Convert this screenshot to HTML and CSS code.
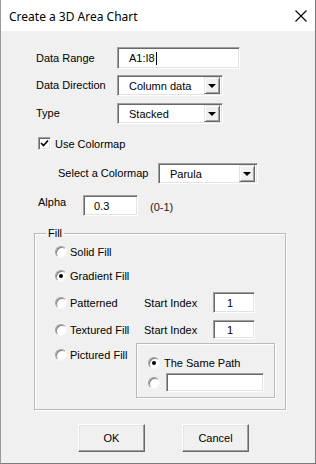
FILE: index.html
```html
<!DOCTYPE html>
<html lang="en">
<head>
    <meta charset="UTF-8">
    <meta name="viewport" content="width=device-width, initial-scale=1.0">
    <title>Create a 3D Area Chart</title>
    <link rel="stylesheet" href="styles.css">
</head>
<body>
    <div class="window">
        <div class="titlebar">
            <span class="title">Create a 3D Area Chart</span>
            <svg class="close" width="12" height="12" viewBox="0 0 12 12">
                <path d="M0.5 0.5 L11.5 11.5 M11.5 0.5 L0.5 11.5" stroke="#000" stroke-width="1.1" fill="none"/>
            </svg>
        </div>

        <div class="content">
            <div class="row row-range">
                <span class="label">Data Range</span>
                <div class="field field-range">A1:I8<span class="caret"></span></div>
            </div>
            <div class="row row-dir">
                <span class="label">Data Direction</span>
                <div class="combo combo-main">
                    <span class="combo-text">Column data</span>
                    <span class="drop"><span class="arrow"></span></span>
                </div>
            </div>
            <div class="row row-type">
                <span class="label">Type</span>
                <div class="combo combo-main">
                    <span class="combo-text">Stacked</span>
                    <span class="drop"><span class="arrow"></span></span>
                </div>
            </div>

            <div class="row row-check">
                <span class="checkbox">
                    <svg width="9" height="9" viewBox="0 0 9 9">
                        <path d="M1 4 L3.5 6.5 L8 1.5" stroke="#000" stroke-width="1.6" fill="none"/>
                    </svg>
                </span>
                <span class="check-text">Use Colormap</span>
            </div>

            <div class="row row-cmap">
                <span class="label label-cmap">Select a Colormap</span>
                <div class="combo combo-cmap">
                    <span class="combo-text">Parula</span>
                    <span class="drop"><span class="arrow"></span></span>
                </div>
            </div>

            <div class="row row-alpha">
                <span class="label label-alpha">Alpha</span>
                <div class="field field-alpha">0.3</div>
                <span class="hint">(0-1)</span>
            </div>

            <div class="group">
                <span class="legend">Fill</span>
                <div class="grow grow-solid">
                    <span class="option"><span class="radio"></span>Solid Fill</span>
                </div>
                <div class="grow grow-grad">
                    <span class="option"><span class="radio checked"></span>Gradient Fill</span>
                </div>
                <div class="grow grow-pat">
                    <span class="option"><span class="radio"></span>Patterned</span>
                    <span class="idx-label">Start Index</span>
                    <div class="field field-idx">1</div>
                </div>
                <div class="grow grow-tex">
                    <span class="option"><span class="radio"></span>Textured Fill</span>
                    <span class="idx-label">Start Index</span>
                    <div class="field field-idx">1</div>
                </div>
                <div class="grow grow-pic">
                    <span class="option option-pic"><span class="radio"></span>Pictured Fill</span>
                    <div class="subgroup">
                        <div class="sub-row sub-same">
                            <span class="radio checked"></span>The Same Path
                        </div>
                        <div class="sub-row sub-path">
                            <span class="radio"></span>
                            <div class="field field-path"></div>
                        </div>
                    </div>
                </div>
            </div>

            <div class="buttons">
                <button class="btn">OK</button>
                <button class="btn">Cancel</button>
            </div>
        </div>
    </div>
</body>
</html>
```

FILE: styles.css
```css
* {
    box-sizing: border-box;
}
body {
    margin: 0;
    padding: 0;
    font-family: "Liberation Sans", Arial, sans-serif;
    font-size: 11px;
    color: #000;
    background: #f0f0f0;
}
.window {
    width: 316px;
    height: 464px;
    background: #f0f0f0;
    border-left: 1px solid #9a9a9a;
    border-right: 1px solid #7a7a7a;
    border-bottom: 1px solid #7a7a7a;
    overflow: hidden;
}
.titlebar {
    height: 31px;
    background: #fff;
    display: flex;
    align-items: center;
    padding-left: 8px;
    padding-right: 8px;
}
.title {
    font-family: "Noto Sans", "Open Sans", sans-serif;
    font-size: 12px;
    flex: 1;
    padding-top: 1px;
}
.close {
    margin-right: 0;
}
.content {
    padding-top: 16px;
}
.row {
    display: flex;
    align-items: center;
    margin-left: 35px;
}
.label {
    width: 81px;
    line-height: 13px;
}

/* sunken controls */
.field,
.combo,
.checkbox {
    background: #fff;
    border: 1px solid;
    border-color: #a0a0a0 #fff #fff #a0a0a0;
    box-shadow: inset 1px 1px 0 #696969, inset -1px -1px 0 #e3e3e3;
}
.field {
    display: flex;
    align-items: center;
    padding-left: 11px;
}
.row-range {
    height: 22px;
}
.field-range {
    width: 123px;
    height: 22px;
}
.caret {
    display: inline-block;
    width: 1px;
    height: 13px;
    background: #000;
    margin-left: 1px;
}
.row-dir {
    margin-top: 6px;
    height: 21px;
}
.row-type {
    margin-top: 7px;
    height: 21px;
}
.combo {
    display: flex;
    align-items: center;
    height: 21px;
    padding: 2px;
}
.combo-main {
    width: 106px;
}
.combo-text {
    flex: 1;
    padding-left: 9px;
}
.drop {
    width: 16px;
    height: 17px;
    background: #f0f0f0;
    border: 1px solid;
    border-color: #e3e3e3 #696969 #696969 #e3e3e3;
    box-shadow: inset 1px 1px 0 #fff, inset -1px -1px 0 #a0a0a0;
    display: flex;
    align-items: center;
    justify-content: center;
}
.arrow {
    width: 0;
    height: 0;
    border-left: 4px solid transparent;
    border-right: 4px solid transparent;
    border-top: 4px solid #000;
    margin-top: 1px;
}

.row-check {
    margin-top: 13px;
    margin-left: 37px;
    height: 13px;
}
.checkbox {
    width: 13px;
    height: 13px;
    display: flex;
    align-items: center;
    justify-content: center;
}
.check-text {
    margin-left: 4px;
}

.row-cmap {
    margin-top: 13px;
    margin-left: 57px;
    height: 21px;
}
.label-cmap {
    width: 100px;
}
.combo-cmap {
    width: 100px;
}

.row-alpha {
    margin-top: 11px;
    margin-left: 37px;
    height: 21px;
    align-items: flex-start;
}
.label-alpha {
    width: 45px;
    margin-top: 1px;
}
.field-alpha {
    width: 55px;
    height: 21px;
    padding-left: 10px;
}
.hint {
    margin-left: 12px;
    margin-top: 6px;
    color: #202020;
}

/* Fill group */
.group {
    position: relative;
    margin-top: 17px;
    margin-left: 33px;
    width: 252px;
    height: 177px;
    border: 1px solid #b9b9b9;
    box-shadow: 1px 1px 0 #fff, inset 1px 1px 0 #fff;
    padding-top: 9px;
}
.legend {
    position: absolute;
    top: -7px;
    left: 11px;
    padding: 0 2px;
    background: #f0f0f0;
    line-height: 13px;
}
.grow {
    display: flex;
    align-items: center;
    padding-left: 20px;
}
.grow-solid {
    height: 18px;
}
.grow-grad {
    margin-top: 6px;
    height: 18px;
}
.grow-pat {
    margin-top: 7px;
    height: 21px;
}
.grow-tex {
    margin-top: 7px;
    height: 19px;
}
.grow-pic {
    margin-top: 4px;
    align-items: flex-start;
}
.option {
    display: flex;
    align-items: center;
    width: 89px;
}
.option-pic {
    width: 81px;
    margin-top: 6px;
}
.radio {
    width: 12px;
    height: 12px;
    border-radius: 50%;
    background: #fff;
    border: 1px solid;
    border-color: #a0a0a0 #f6f6f6 #f6f6f6 #a0a0a0;
    box-shadow: inset 1px 1px 0 #808080;
    margin-right: 3px;
    display: flex;
    align-items: center;
    justify-content: center;
    flex-shrink: 0;
}
.radio.checked::after {
    content: "";
    width: 4px;
    height: 4px;
    border-radius: 50%;
    background: #000;
}
.idx-label {
    width: 69px;
}
.field-idx {
    width: 42px;
    height: 100%;
    padding-left: 13px;
}
.subgroup {
    width: 139px;
    height: 55px;
    border: 1px solid #b9b9b9;
    box-shadow: 1px 1px 0 #fff, inset 1px 1px 0 #fff;
    padding-left: 11px;
    padding-top: 11px;
}
.sub-row {
    display: flex;
    align-items: center;
}
.sub-same {
    height: 16px;
}
.sub-same .radio {
    margin-right: 4px;
}
.sub-path {
    margin-top: 2px;
    height: 19px;
}
.sub-path .radio {
    margin-right: 6px;
}
.field-path {
    width: 98px;
    height: 19px;
}

/* buttons */
.buttons {
    display: flex;
    gap: 37px;
    margin-top: 14px;
    margin-left: 77px;
}
.btn {
    width: 67px;
    height: 28px;
    font-family: "Liberation Sans", Arial, sans-serif;
    font-size: 11px;
    color: #000;
    background: #f0f0f0;
    border: 1px solid;
    border-color: #fff #696969 #696969 #fff;
    box-shadow: inset -1px -1px 0 #a0a0a0, inset 1px 1px 0 #e3e3e3;
    padding: 0;
}
```
